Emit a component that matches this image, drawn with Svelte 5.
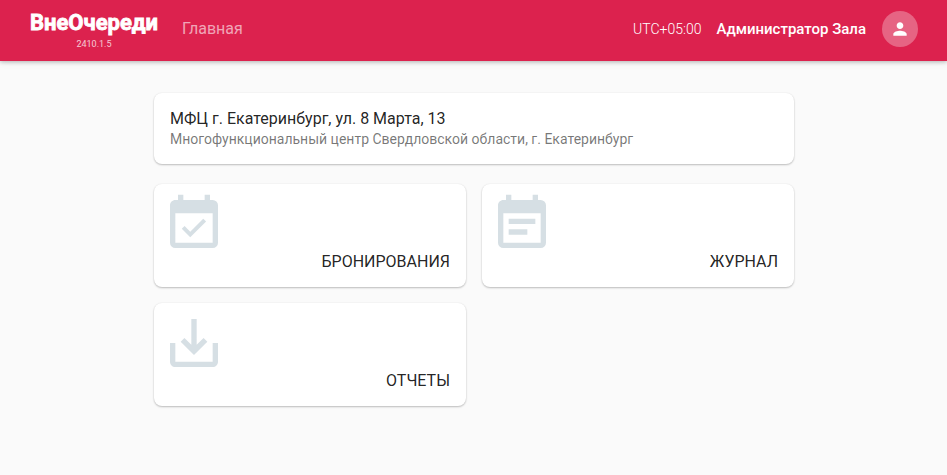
<script>
  const cards = [
    {
      title: 'БРОНИРОВАНИЯ',
      icon: 'M19 19H5V8h14M19 3h-1V1h-2v2H8V1H6v2H5c-1.11 0-2 .9-2 2v14a2 2 0 0 0 2 2h14a2 2 0 0 0 2-2V5a2 2 0 0 0-2-2M16.53 11.06L15.47 10l-4.88 4.88-2.12-2.12-1.06 1.06L10.59 17l5.94-5.94z'
    },
    {
      title: 'ЖУРНАЛ',
      icon: 'M19 19H5V8h14M19 3h-1V1h-2v2H8V1H6v2H5c-1.11 0-2 .9-2 2v14a2 2 0 0 0 2 2h14a2 2 0 0 0 2-2V5a2 2 0 0 0-2-2M17 10H7v2h10v-2zM14 14H7v2h7v-2z'
    },
    {
      title: 'ОТЧЕТЫ',
      icon: 'M19 12v7H5v-7H3v7c0 1.1.9 2 2 2h14c1.1 0 2-.9 2-2v-7h-2zm-6 .67l2.59-2.58L17 11.5l-5 5-5-5 1.41-1.41L11 12.67V3h2z'
    }
  ];
</script>

<div class="page">
  <header>
    <div class="brand">
      <span class="logo">ВнеОчереди</span>
      <span class="version">2410.1.5</span>
    </div>
    <span class="nav">Главная</span>
    <span class="zone">UTC+05:00</span>
    <span class="user">Администратор Зала</span>
    <span class="avatar">
      <svg viewBox="0 0 24 24" width="20" height="20">
        <path d="M12 12c2.21 0 4-1.79 4-4s-1.79-4-4-4-4 1.79-4 4 1.79 4 4 4zm0 2c-2.67 0-8 1.34-8 4v2h16v-2c0-2.66-5.33-4-8-4z" />
      </svg>
    </span>
  </header>

  <main>
    <section class="card office">
      <div class="name">МФЦ г. Екатеринбург, ул. 8 Марта, 13</div>
      <div class="org">Многофункциональный центр Свердловской области, г. Екатеринбург</div>
    </section>
    <div class="grid">
      {#each cards as card}
        <section class="card tile">
          <svg viewBox="0 0 24 24" width="64" height="64">
            <path fill-rule="evenodd" d={card.icon} />
          </svg>
          <span class="title">{card.title}</span>
        </section>
      {/each}
    </div>
  </main>
</div>

<style>
  :global(body) {
    margin: 0;
    background: #fafafa;
  }
  .page {
    min-height: 475px;
    box-sizing: border-box;
    background: #fafafa;
    font-family: Roboto, 'Noto Sans', sans-serif;
    color: rgba(0, 0, 0, 0.87);
  }
  header {
    display: flex;
    align-items: center;
    height: 61px;
    box-sizing: border-box;
    padding: 0 29px 3px 30px;
    background: #dc224e;
    color: #fff;
    box-shadow: 0 1px 4px rgba(0, 0, 0, 0.24), 0 1px 8px rgba(0, 0, 0, 0.08);
  }
  .brand {
    display: flex;
    flex-direction: column;
    align-items: center;
    width: 128px;
    white-space: nowrap;
  }
  .logo {
    font-size: 22px;
    line-height: 26px;
    margin-top: 2px;
    font-weight: 700;
    letter-spacing: 0;
    -webkit-text-stroke: 0.8px #fff;
  }
  .version {
    font-size: 9px;
    line-height: 12px;
    margin-top: 2px;
    opacity: 0.75;
  }
  .nav {
    margin: -2px auto 0 24px;
    font-size: 16px;
    color: rgba(255, 255, 255, 0.6);
  }
  .zone {
    font-size: 14px;
    font-weight: 300;
    margin-right: 15px;
  }
  .user {
    font-size: 15px;
    font-weight: 500;
    margin-right: 16px;
  }
  .avatar {
    display: flex;
    align-items: center;
    justify-content: center;
    width: 36px;
    height: 36px;
    border-radius: 50%;
    background: rgba(255, 255, 255, 0.3);
  }
  .avatar svg {
    fill: #fff;
  }
  main {
    width: 640px;
    margin: 0 auto;
    padding: 32px 0 0 1px;
  }
  .card {
    background: #fff;
    border-radius: 8px;
    box-shadow: 0 1px 2px rgba(0, 0, 0, 0.24), 0 0 2px rgba(0, 0, 0, 0.06);
    box-sizing: border-box;
  }
  .office {
    height: 71px;
    padding: 14px 16px;
  }
  .name {
    font-size: 16px;
    line-height: 24px;
  }
  .org {
    font-size: 14px;
    line-height: 16px;
    color: rgba(0, 0, 0, 0.54);
  }
  .grid {
    display: grid;
    grid-template-columns: 312px 312px;
    gap: 16px;
    margin-top: 20px;
  }
  .tile {
    display: flex;
    flex-direction: column;
    height: 103px;
    padding: 8px 16px 0 8px;
  }
  .tile svg {
    fill: #d6dfe4;
    flex: none;
  }
  .title {
    align-self: flex-end;
    font-size: 16px;
    line-height: 24px;
    margin-top: -6px;
  }
</style>
